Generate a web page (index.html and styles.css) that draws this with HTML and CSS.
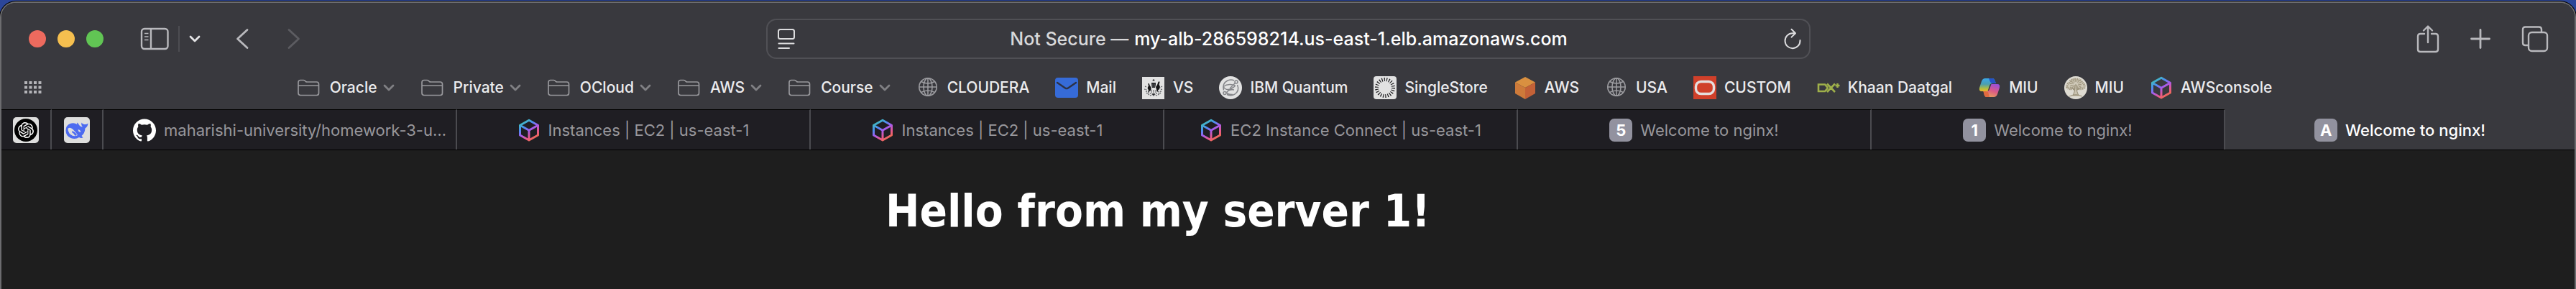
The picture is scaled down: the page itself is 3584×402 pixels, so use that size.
FILE: index.html
```html
<!DOCTYPE html>
<html lang="en">
<head>
<meta charset="utf-8">
<title>Welcome to nginx!</title>
<link rel="stylesheet" href="styles.css">
</head>
<body>
<svg class="defs" aria-hidden="true">
  <defs>
    <linearGradient id="cube-ink" x1="0.2" y1="0" x2="0.8" y2="1">
      <stop offset="0" stop-color="#3fc3b4"/><stop offset="0.28" stop-color="#4a8ff0"/><stop offset="0.5" stop-color="#a45cf0"/><stop offset="0.75" stop-color="#e8588f"/><stop offset="1" stop-color="#f07040"/>
    </linearGradient>
    <linearGradient id="pilot-left" x1="0" y1="0" x2="0" y2="1">
      <stop offset="0" stop-color="#3aa8ea"/><stop offset="0.45" stop-color="#4a9fb0"/><stop offset="0.8" stop-color="#b5bf3c"/><stop offset="1" stop-color="#efb52c"/>
    </linearGradient>
    <linearGradient id="pilot-right" x1="0.7" y1="0" x2="0.3" y2="1">
      <stop offset="0" stop-color="#9a50d8"/><stop offset="0.5" stop-color="#dc5a86"/><stop offset="1" stop-color="#e8a05a"/>
    </linearGradient>
    <symbol id="folder" viewBox="0 0 32 24"><path d="M2 19V4.500Q2 1.500 5 1.500H9Q10.500 1.500 11.500 2.500L12.300 3.300Q13 4 14.500 4H27.500Q30.500 4 30.500 7V19.500Q30.500 22.500 27.500 22.500H5Q2 22.500 2 19.500ZM2 9H30.500" fill="none" stroke="currentColor" stroke-width="1.700"/></symbol>
    <symbol id="chevron" viewBox="0 0 16 10"><path d="M2 2L8 8L14 2" fill="none" stroke="currentColor" stroke-width="2.800" stroke-linecap="round" stroke-linejoin="round"/></symbol>
    <symbol id="globe" viewBox="0 0 28 28"><g fill="none" stroke="currentColor" stroke-width="1.600"><circle cx="14" cy="14" r="12.200"/><ellipse cx="14" cy="14" rx="6" ry="12.200"/><path d="M14 2V26M2 14H26M4.500 6.500Q14 11.500 23.500 6.500M4.500 21.500Q14 16.500 23.500 21.500"/></g></symbol>
    <symbol id="cube" viewBox="0 0 32 32"><path d="M16 2.200L28.500 9.200V23L16 30L3.500 23V9.200ZM3.500 9.200L16 16.200L28.500 9.200M16 16.200V30" fill="none" stroke="url(#cube-ink)" stroke-width="3" stroke-linejoin="round"/></symbol>
  </defs>
</svg>

<div class="window">
  <header class="chrome">
    <div class="toolbar">
      <div class="tools tools-left">
        <div class="lights">
          <button class="light light-close" aria-label="Close"></button>
          <button class="light light-min" aria-label="Minimise"></button>
          <button class="light light-zoom" aria-label="Zoom"></button>
        </div>
        <div class="sidebar-group">
          <button class="tool" aria-label="Sidebar"><svg width="40" height="32" viewBox="0 0 40 32"><g fill="none" stroke="currentColor" stroke-width="2.400"><rect x="2" y="2" width="36.500" height="28" rx="4"/><path d="M15 2V30"/><path d="M6 8.500H11.500M6 13H11.500M6 17.500H11.500" stroke-width="1.600"/></g></svg></button>
          <span class="rule"></span>
          <button class="tool menu" aria-label="Tab groups"><svg width="16" height="10"><use href="#chevron"/></svg></button>
        </div>
        <button class="tool" aria-label="Back"><svg width="20" height="30" viewBox="0 0 20 30"><path d="M17 2.500L3.500 15L17 27.500" fill="none" stroke="currentColor" stroke-width="2.800" stroke-linecap="round" stroke-linejoin="round"/></svg></button>
        <button class="tool forward" aria-label="Forward" disabled><svg width="20" height="30" viewBox="0 0 20 30"><path d="M3 2.500L16.500 15L3 27.500" fill="none" stroke="currentColor" stroke-width="2.800" stroke-linecap="round" stroke-linejoin="round"/></svg></button>
      </div>
      <form class="address">
        <button class="field-button" type="button" aria-label="Page menu"><svg width="24" height="30" viewBox="0 0 24 30"><g fill="none" stroke="currentColor" stroke-width="2" stroke-linecap="round"><rect x="1" y="2" width="22" height="13" rx="2.500"/><path d="M1.500 21.500H22.500M1.500 28H16"/></g></svg></button>
        <div class="location">
          <label for="url">Not Secure —</label>
          <input id="url" type="text" value="my-alb-286598214.us-east-1.elb.amazonaws.com">
        </div>
        <button class="field-button" type="button" aria-label="Reload"><svg width="26" height="30" viewBox="0 0 26 30"><path d="M16.500 7.200H13A10.500 10.500 0 1 0 23.500 17M11.500 1.800L17 7.200L11.500 12.600" fill="none" stroke="currentColor" stroke-width="2" stroke-linecap="round" stroke-linejoin="round"/></svg></button>
      </form>
      <div class="tools tools-right">
        <button class="tool" aria-label="Share"><svg width="32" height="40" viewBox="0 0 32 40"><path d="M11 13H5.500Q2 13 2 16.500V34.500Q2 38 5.500 38H26.500Q30 38 30 34.500V16.500Q30 13 26.500 13H21M16 25V3M10 8.500L16 2.500L22 8.500" fill="none" stroke="currentColor" stroke-width="2.400" stroke-linecap="round" stroke-linejoin="round"/></svg></button>
        <button class="tool" aria-label="New tab"><svg width="30" height="30" viewBox="0 0 30 30"><path d="M15 2.500V27.500M2.500 15H27.500" fill="none" stroke="currentColor" stroke-width="2.800" stroke-linecap="round"/></svg></button>
        <button class="tool" aria-label="Tab overview"><svg width="38" height="38" viewBox="0 0 38 38"><g fill="none" stroke="currentColor" stroke-width="2.400"><rect x="10" y="10" width="26" height="26" rx="4.500"/><path d="M28 9V6Q28 2.500 24.500 2.500H5.500Q2 2.500 2 6V24.500Q2 28 5.500 28H9"/></g></svg></button>
      </div>
    </div>

    <nav class="favorites" aria-label="Favorites">
      <button class="grid-button" aria-label="Show all"><svg width="24" height="18" viewBox="0 0 24 18" fill="currentColor"><path d="M0 0h4v4h-4zM6.500 0h4v4h-4zM13 0h4v4h-4zM19.500 0h4v4h-4zM0 6.500h4v4h-4zM6.500 6.500h4v4h-4zM13 6.500h4v4h-4zM19.500 6.500h4v4h-4zM0 13h4v4h-4zM6.500 13h4v4h-4zM13 13h4v4h-4zM19.500 13h4v4h-4z"/></svg></button>
      <div class="links">
        <button class="folder"><svg width="32" height="24"><use href="#folder"/></svg>Oracle<svg class="chev" width="16" height="10"><use href="#chevron"/></svg></button>
        <button class="folder"><svg width="32" height="24"><use href="#folder"/></svg>Private<svg class="chev" width="16" height="10"><use href="#chevron"/></svg></button>
        <button class="folder"><svg width="32" height="24"><use href="#folder"/></svg>OCloud<svg class="chev" width="16" height="10"><use href="#chevron"/></svg></button>
        <button class="folder"><svg width="32" height="24"><use href="#folder"/></svg>AWS<svg class="chev" width="16" height="10"><use href="#chevron"/></svg></button>
        <button class="folder"><svg width="32" height="24"><use href="#folder"/></svg>Course<svg class="chev" width="16" height="10"><use href="#chevron"/></svg></button>
        <a class="link" href="#"><svg class="site muted" viewBox="0 0 32 32"><use href="#globe" x="2" y="1" width="28" height="28"/></svg>CLOUDERA</a>
        <a class="link" href="#"><svg class="site" viewBox="0 0 32 32"><rect y="2" width="32" height="28" rx="4" fill="#366bd8"/><path d="M3 9L14 16.500Q16 17.800 18 16.500L29 9" fill="none" stroke="#2c3246" stroke-width="2.400" stroke-linecap="round"/></svg>Mail</a>
        <a class="link" href="#"><svg class="site" viewBox="0 0 32 32"><rect y="1" width="31" height="31" fill="#e2e2e2"/><path d="M15 4.500h2l.5 2h-3zM13 9h6v3l-1 4h-4l-1-4z" fill="#2a2b2e"/><path d="M8 10l2 .5 .5 2 2 3v4l-2 1-1 2H8l1-3-1.500-3 1.500-3.500zM19 15l2-3 1.500-4 1.500-1 .5 2-1 2 1.500 4-1 3-2 1.500.5 2H21l-1-3z" fill="#141416"/><path d="M4 14l2 1M3 18l4 1M5 21l5 1M8 25l6-1M28 14l-3 2M28 18l-3 1M27 21l-5 1M24 25l-6-1M11 27l5-2 5 2M6 23l4 3M26 23l-4 3M13 12h6M13 14h6M12 20h8M12 22h8" stroke="#5b5d61" stroke-width="1.200" fill="none" stroke-dasharray="2 1"/><path d="M14 24h4l-2 4z" fill="#2a2b2e"/></svg>VS</a>
        <a class="link" href="#"><svg class="site" viewBox="0 0 32 32"><circle cx="16" cy="16" r="16" fill="#e2e2e2"/><g fill="none" stroke="#85868a" stroke-width="1.500"><path d="M25.500 12Q29 20 22 25Q17 28 11 25.500M6.500 19.500Q4 10 12 6Q17 4 21 6M6 14.500Q9 20 16 18L20 15.500Q24 13 21 12.500M6 14.500Q12 10 21 12.500M21 19Q14 18 11 22Q10 25 19 25.500M15 17L22.500 9.500"/><circle cx="24" cy="8" r="2"/><circle cx="8" cy="23.500" r="2"/></g></svg>IBM Quantum</a>
        <a class="link" href="#"><svg class="site" viewBox="0 0 32 32"><rect width="32" height="32" rx="4" fill="#e2e2e2"/><circle cx="16" cy="16" r="11.500" fill="none" stroke="#1b1b1e" stroke-width="5" stroke-dasharray="1.200 2.084"/></svg>SingleStore</a>
        <a class="link" href="#"><svg class="site" viewBox="0 0 32 32"><path d="M16 1L30 8.500L16 16L2 8.500Z" fill="#d99040"/><path d="M2 8.500L16 16V32L2 24Z" fill="#cd7a3a"/><path d="M30 8.500L16 16V32L30 24Z" fill="#c36137"/></svg>AWS</a>
        <a class="link" href="#"><svg class="site muted" viewBox="0 0 32 32"><use href="#globe" x="2" y="1" width="28" height="28"/></svg>USA</a>
        <a class="link" href="#"><svg class="site" viewBox="0 0 32 32"><rect width="32" height="32" fill="#d0402a"/><rect x="3.500" y="7.500" width="25" height="17" rx="7" fill="none" stroke="#e4dedd" stroke-width="3.400"/></svg>CUSTOM</a>
        <a class="link" href="#"><svg class="site" viewBox="0 0 32 32"><path d="M2 11.500H11L14.500 15.500V17L11 21H2ZM14 10.500L25 22M25 10.500L14 22M28.500 10V16M25.500 13H31.500" fill="none" stroke="#9fb04a" stroke-width="2.600"/></svg>Khaan Daatgal</a>
        <a class="link" href="#"><svg class="site" viewBox="0 0 32 32"><path d="M10 3H20Q22.500 3 23.500 6L25 10H20Q17 10 16 13L13.500 21H5Q1 21 2 16L5 7Q6.500 3 10 3Z" fill="url(#pilot-left)"/><path d="M15 3H20Q22.500 3 23.500 6L25 10H21Q18 10 17 8Z" fill="#2454c8"/><path d="M22 29H12Q9.500 29 9 26L7.500 21H12Q15 21 16 18L18.500 11H27Q31 11 30 16L27 25Q25.500 29 22 29Z" fill="url(#pilot-right)"/><path d="M16 29H12Q9.500 29 8.500 26L7.500 21H11L14 22Z" fill="#e06a40"/></svg>MIU</a>
        <a class="link" href="#"><svg class="site" viewBox="0 0 32 32"><circle cx="16" cy="16" r="16" fill="#dedbd2"/><path d="M4 16Q3 11 7 9Q9 4 16 4Q23 4 25 9Q29 11 28 16Q24 19 16 17Q8 19 4 16Z" fill="#cfc9b8" stroke="#a39a83" stroke-width="3" stroke-dasharray="1.500 1"/><circle cx="16" cy="11" r="5.500" fill="none" stroke="#a39a83" stroke-width="5" stroke-dasharray="1.200 1.200"/><path d="M15 12Q15 23 12 26H20Q17 23 17 12ZM8 15L15 20M24 15L17 20M7 28Q16 24 25 28" fill="#c9c2b0" stroke="#978e76" stroke-width="1"/></svg>MIU</a>
        <a class="link" href="#"><svg class="site" viewBox="0 0 32 32"><use href="#cube"/></svg>AWSconsole</a>
      </div>
    </nav>
  </header>

  <nav class="tabs" aria-label="Tabs">
    <button class="pinned" aria-label="ChatGPT"><svg width="36" height="36" viewBox="0 0 36 36"><rect width="36" height="36" rx="5" fill="#dedede"/><circle cx="18" cy="18" r="16" fill="#000"/><path transform="translate(7 7) scale(.917)" fill="#fff" d="M22.282 9.821a5.985 5.985 0 0 0-.516-4.910 6.046 6.046 0 0 0-6.510-2.900A6.065 6.065 0 0 0 4.981 4.182a5.985 5.985 0 0 0-3.998 2.900 6.046 6.046 0 0 0 .743 7.097 5.980 5.980 0 0 0 .511 4.911 6.051 6.051 0 0 0 6.515 2.900A5.985 5.985 0 0 0 13.260 24a6.056 6.056 0 0 0 5.772-4.206 5.989 5.989 0 0 0 3.998-2.900 6.056 6.056 0 0 0-.748-7.073zm-9.022 12.608a4.476 4.476 0 0 1-2.876-1.041l.142-.080 4.778-2.758a.795.795 0 0 0 .393-.681v-6.737l2.020 1.169a.071.071 0 0 1 .038.052v5.583a4.504 4.504 0 0 1-4.495 4.494zm-9.661-4.125a4.471 4.471 0 0 1-.535-3.014l.142.085 4.783 2.758a.771.771 0 0 0 .781 0l5.843-3.369v2.332a.080.080 0 0 1-.033.062L9.740 19.950a4.499 4.499 0 0 1-6.141-1.646zM2.341 7.896a4.485 4.485 0 0 1 2.366-1.973V11.600a.766.766 0 0 0 .388.677l5.814 3.354-2.020 1.169a.076.076 0 0 1-.071 0l-4.830-2.787A4.504 4.504 0 0 1 2.341 7.872zm16.596 3.856L13.104 8.364 15.119 7.200a.076.076 0 0 1 .071 0l4.830 2.791a4.494 4.494 0 0 1-.677 8.104v-5.677a.790.790 0 0 0-.407-.667zm2.011-3.023l-.142-.085-4.774-2.782a.776.776 0 0 0-.785 0L9.409 9.230V6.897a.066.066 0 0 1 .028-.062l4.830-2.787a4.499 4.499 0 0 1 6.680 4.660zM8.307 12.863l-2.020-1.164a.080.080 0 0 1-.038-.057V6.074a4.499 4.499 0 0 1 7.376-3.454l-.142.081L8.704 5.459a.795.795 0 0 0-.393.681zm1.098-2.365l2.602-1.500 2.607 1.500v2.999l-2.597 1.500-2.607-1.500Z"/></svg></button>
    <button class="pinned" aria-label="DeepSeek"><svg width="36" height="36" viewBox="0 0 36 36"><rect width="36" height="36" rx="5" fill="#dedede"/><path fill="#4d6bf0" d="M33.500 8.500Q31 10.500 28.500 10Q25.500 9.500 24.500 7.500Q23.500 11 26 13.500Q22.500 13.500 20.500 10Q19.500 8 18.500 7.500Q17.500 8.500 18.500 10Q14 7 8.500 9Q2.500 11.500 2.500 18.500Q2.500 26 9.500 29Q16 31.500 21 28Q23.500 29.500 26.500 28.500L24.500 26Q29 22.500 29.500 15.500Q33 13.500 33.500 8.500Z"/><path fill="#dedede" d="M5.500 16Q8 13.500 12 16.500Q16.500 20.500 19 25Q14 28 9 24Q5.500 20.500 5.500 16Z"/><path fill="#4d6bf0" d="M11 19.500Q15 19.500 18 24.500L15.500 26Q14 22.500 11 21Z"/><path fill="#dedede" d="M19.500 17.500Q22 16.800 23.300 20L22.500 21Q20 20.500 19.500 17.500Z"/></svg></button>
    <button class="tab tab-long"><svg class="site" viewBox="0 0 24 24" fill="#fff"><path d="M12 .297c-6.630 0-12 5.373-12 12 0 5.303 3.438 9.800 8.205 11.385.600.113.820-.258.820-.577 0-.285-.010-1.040-.015-2.040-3.338.724-4.042-1.610-4.042-1.610C4.422 18.070 3.633 17.700 3.633 17.700c-1.087-.744.084-.729.084-.729 1.205.084 1.838 1.236 1.838 1.236 1.070 1.835 2.809 1.305 3.495.998.108-.776.417-1.305.760-1.605-2.665-.300-5.466-1.332-5.466-5.930 0-1.310.465-2.380 1.235-3.220-.135-.303-.540-1.523.105-3.176 0 0 1.005-.322 3.300 1.230.960-.267 1.980-.399 3-.405 1.020.006 2.040.138 3 .405 2.280-1.552 3.285-1.230 3.285-1.230.645 1.653.240 2.873.120 3.176.765.840 1.230 1.910 1.230 3.220 0 4.610-2.805 5.625-5.475 5.920.420.360.810 1.096.810 2.220 0 1.606-.015 2.896-.015 3.286 0 .315.210.690.825.570C20.565 22.092 24 17.592 24 12.297c0-6.627-5.373-12-12-12"/></svg><span class="tab-name">maharishi-university/homework-3-u…</span></button>
    <button class="tab"><svg class="site"><use href="#cube"/></svg>Instances | EC2 | us-east-1</button>
    <button class="tab"><svg class="site"><use href="#cube"/></svg>Instances | EC2 | us-east-1</button>
    <button class="tab"><svg class="site"><use href="#cube"/></svg>EC2 Instance Connect | us-east-1</button>
    <button class="tab"><span class="letter">5</span>Welcome to nginx!</button>
    <button class="tab"><span class="letter">1</span>Welcome to nginx!</button>
    <button class="tab tab-active" aria-current="page"><span class="letter">A</span>Welcome to nginx!</button>
  </nav>

  <main class="page">
    <h1>Hello from my server 1!</h1>
  </main>
</div>
</body>
</html>
```
FILE: styles.css
```css
* {
  box-sizing: border-box;
}

html {
  background: #2c4699;
}

body {
  margin: 0;
  padding-top: 2px;
  font-family: Inter, "Liberation Sans", sans-serif;
  font-size: 22px;
  color: #ececee;
}

button {
  margin: 0;
  padding: 0;
  border: 0;
  background: none;
  font: inherit;
  color: inherit;
}

svg {
  display: block;
  flex: none;
}

.defs {
  position: absolute;
  width: 0;
  height: 0;
}

.window {
  display: flex;
  flex-direction: column;
  min-height: calc(100vh - 2px);
  border: 2px solid #6c6c6f;
  border-bottom: 0;
  border-radius: 22px 22px 0 0;
  box-shadow: 0 0 0 1px #000;
  background: #1e1e1e;
  overflow: hidden;
}

.chrome {
  background: #39393e;
}

/* Toolbar */

.toolbar {
  display: grid;
  grid-template-columns: 1fr minmax(0, 1453px) 1fr;
  align-items: center;
  padding-top: 22px;
}

.tools {
  display: flex;
  align-items: center;
}

.tools-left {
  padding-left: 38px;
}

.tools-right {
  justify-content: flex-end;
  gap: 42px;
  padding-right: 36px;
}

.tool {
  color: #b9b9bd;
}

.lights {
  display: flex;
  gap: 16px;
  margin-right: 51px;
}

.light {
  width: 24px;
  height: 24px;
  border-radius: 50%;
}

.light-close {
  background: #ed6a5e;
}

.light-min {
  background: #f5bf4f;
}

.light-zoom {
  background: #61c554;
}

.sidebar-group {
  display: flex;
  align-items: center;
  gap: 13px;
  margin-right: 48px;
}

.rule {
  width: 2px;
  height: 36px;
  background: #4d4d52;
}

.menu {
  color: #e4e4e6;
}

.forward {
  margin-left: 52px;
  color: #5c5c61;
}

.address {
  display: flex;
  align-items: center;
  height: 56px;
  padding: 0 10px 0 14px;
  border: 2px solid #505055;
  border-radius: 14px;
}

.location {
  display: flex;
  flex: 1;
  justify-content: center;
  gap: 8px;
  font-size: 25px;
  font-weight: 500;
  line-height: 32px;
  color: #d8d8da;
}

.location input {
  field-sizing: content;
  padding: 0;
  border: 0;
  outline: 0;
  background: none;
  font: inherit;
  color: #fff;
}

.field-button {
  color: #dcdcde;
}

/* Favorites bar */

.favorites {
  display: flex;
  align-items: center;
  height: 70px;
  padding: 10px 66px 0 32px;
  font-size: 21px;
  font-weight: 500;
}

.grid-button {
  color: #b4b4b8;
}

.links {
  display: flex;
  flex: 1;
  justify-content: center;
  gap: 36px;
  line-height: 32px;
  white-space: nowrap;
}

.folder,
.link {
  display: flex;
  align-items: center;
}

.folder {
  gap: 14px;
}

.folder > svg {
  color: #98989c;
}

.folder .chev {
  margin-left: -6px;
  color: #808084;
}

.link {
  gap: 11px;
  color: inherit;
  text-decoration: none;
}

.site {
  width: 32px;
  height: 32px;
}

.muted {
  color: #9c9ca0;
}

/* Tabs */

.tabs {
  display: grid;
  grid-template-columns: 70px 72px repeat(6, minmax(0, 492fr)) minmax(0, 486fr);
  height: 57px;
  border-bottom: 1px solid #000;
  background: #1f1e23;
  color: #98979c;
}

.pinned,
.tab {
  display: flex;
  align-items: center;
  justify-content: center;
  border-top: 1px solid #000;
  border-right: 2px solid #4b4b50;
  white-space: nowrap;
}

.tab {
  gap: 11px;
}

.tab-long {
  padding: 0 20px 0 48px;
}

.tab-active {
  border-top-color: #39393e;
  border-right: 0;
  background: #39393e;
  color: #fff;
  font-weight: 500;
}

.letter {
  width: 32px;
  height: 32px;
  border-radius: 7px;
  background: #92929f;
  color: #fff;
  font-weight: 700;
  line-height: 33px;
}

/* Page */

.page {
  width: 1120px;
  max-width: 100%;
  margin: 0 auto;
  padding-top: 46px;
}

h1 {
  margin: 0;
  font-family: "DejaVu Sans Condensed", "DejaVu Sans", sans-serif;
  font-size: 63px;
  line-height: 78px;
  color: #fff;
}
```
